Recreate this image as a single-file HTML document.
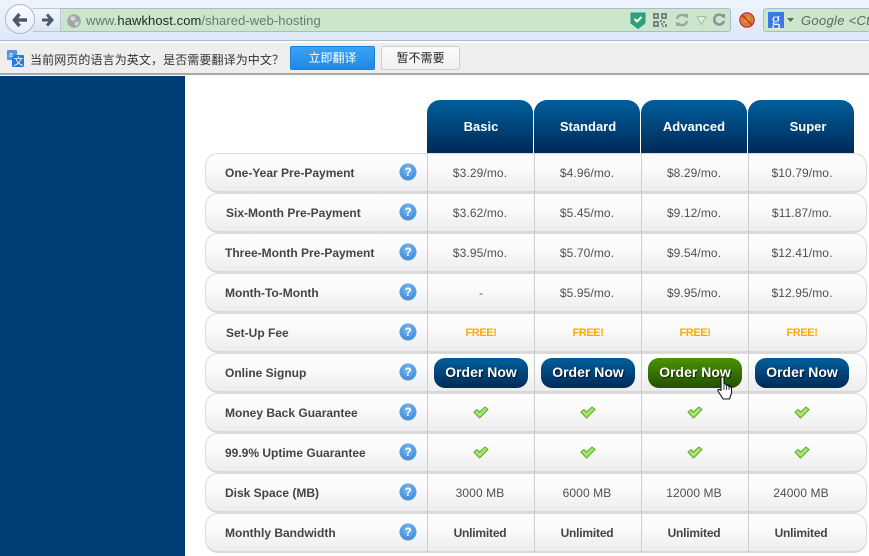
<!DOCTYPE html>
<html><head><meta charset="utf-8"><style>
html,body{margin:0;padding:0;width:869px;height:556px;overflow:hidden;background:#fff;font-family:"Liberation Sans","Noto Sans CJK SC",sans-serif}
div,span,svg{position:absolute}
.top{left:0;top:0;width:869px;height:41px;background:linear-gradient(#eef4fc,#dce8f7)}
.urlbox{left:60px;top:8px;width:671px;height:24px;background:#cbe6ca;border:1px solid #a9bccd;border-left:1px solid #b9cbdc;box-sizing:border-box;border-radius:0 3px 3px 0}
.txt{left:86px;top:13px;font-size:13px;line-height:15px;color:#5f7d6b;white-space:nowrap;letter-spacing:.08px}
.txt b{font-weight:normal;color:#1d2b24}
.barline{left:0;top:73px;width:869px;height:2px;background:#a8a8a8}
.blue{left:0;top:76px;width:185px;height:480px;background:#003c75}
.hd{top:100px;width:106px;height:53px;border-radius:13px 13px 0 0;background:linear-gradient(#005f9c,#002a58);color:#fff;font-weight:bold;font-size:13px;line-height:54px;text-align:center}
.row{left:205px;width:662px;height:40px;box-sizing:border-box;border:1px solid #dcdcdc;border-bottom:2px solid #d8d8d8;border-radius:13px;background:linear-gradient(#fff,#fbfbfb 40%,#ececec)}
.vl{top:153px;width:1px;height:400px;background:#cfcfcf}
.lb{left:225px;font-size:12px;font-weight:bold;color:#444;line-height:14px;white-space:nowrap}
.v{width:106px;font-size:12px;color:#505050;line-height:14px;text-align:center;white-space:nowrap;letter-spacing:.1px}
.v.b{font-weight:bold;color:#444;letter-spacing:-.2px}
.v.f{color:#ffa800;font-weight:bold;font-size:11px;letter-spacing:-.4px}
.q{left:400px;width:16px;height:16px;border-radius:50%;background:radial-gradient(circle at 50% 35%,#7db9f0,#2b7fd6);color:#fff;font-size:12px;font-weight:bold;line-height:16px;text-align:center;box-shadow:0 0 0 .5px #4a90dc}
.o{top:358px;width:94px;height:30px;border-radius:11px;background:linear-gradient(#005f9c,#002a58);color:#fff;font-weight:bold;font-size:14px;line-height:28px;text-align:center;text-shadow:1px 1px 1px #001830;white-space:nowrap}
.o.g{background:linear-gradient(#4b9400,#234f00);text-shadow:1px 1px 1px #142c00}
</style></head><body>
<div class="top"></div>
<div class="urlbox"></div>
<div style="left:33px;top:8px;width:28px;height:24px;background:linear-gradient(#f3f7fc,#dbe6f3);border:1px solid #b5c6d8;border-left:0;box-sizing:border-box"></div>
<div style="left:5px;top:4px;width:30px;height:30px;box-sizing:border-box;border-radius:50%;background:linear-gradient(#fbfdff,#e6eef8);border:1px solid #a9b8c8"></div>
<svg style="left:0;top:0" width="70" height="36" viewBox="0 0 70 36">
<path d="M19.5 14 L14.5 20 L19.5 26 M15 20 H27" fill="none" stroke="#4d5a66" stroke-width="3.4"/>
<path d="M47 14.5 L52 20 L47 25.5 M52 20 H42" fill="none" stroke="#4d5a66" stroke-width="3"/>
</svg>
<svg style="left:67px;top:14px" width="14" height="14" viewBox="0 0 14 14"><circle cx="7" cy="7" r="6.8" fill="#a3a6a6"/><path d="M3 3 L7 2 L9 5 L6 7 L4 6Z M8 8 L12 7 L11 11 L8 12Z" fill="#d4d6d6"/></svg>
<div class="txt">www.<b>hawkhost.com</b>/shared-web-hosting</div>

<svg style="left:630px;top:12px" width="16" height="17" viewBox="0 0 16 17"><path d="M1 1 H15 V11 L8 16.5 L1 11Z" fill="#2fa36b" stroke="#2b8fae" stroke-width="1"/><path d="M4.5 7 L7 9.5 L11.5 5" fill="none" stroke="#fff" stroke-width="2"/></svg>
<svg style="left:653px;top:13px" width="14" height="14" viewBox="0 0 14 14"><path d="M0 0H6V6H0Z M8 0H14V6H8Z M0 8H6V14H0Z" fill="#7d8488"/><path d="M2 2H4V4H2Z M10 2H12V4H10Z M2 10H4V12H2Z" fill="#cbe6ca"/><path d="M7 7H9V9H7Z M10 8H12V10H10Z M8 10H10V12H8Z M12 11H14V14H12Z M9 12.5H11V14H9Z" fill="#7d8488"/></svg>
<svg style="left:675px;top:13px" width="14" height="14" viewBox="0 0 14 14"><path d="M2 6 A5 5 0 0 1 11 4 M12 8 A5 5 0 0 1 3 10" fill="none" stroke="#9aa5a8" stroke-width="2.4"/><path d="M9 1 L13 1 L13 6Z M1 8 L5 13 L1 13Z" fill="#9aa5a8"/></svg>
<svg style="left:696px;top:15px" width="11" height="11" viewBox="0 0 11 11"><path d="M1 1.5 H10 L5.5 9.5Z" fill="#dfeee0" stroke="#a8b8b0"/></svg>
<svg style="left:712px;top:13px" width="14" height="14" viewBox="0 0 14 14"><path d="M11.5 4 A5 5 0 1 0 12 8" fill="none" stroke="#85939a" stroke-width="2.4"/><path d="M8.5 1 L13 1 L13 6Z" fill="#85939a"/></svg>
<svg style="left:739px;top:12px" width="16" height="16" viewBox="0 0 16 16"><circle cx="8" cy="8" r="6" fill="#c9812f"/><path d="M4 9 L9 4 L12 7 L8 11Z" fill="#e09a3a"/><circle cx="8" cy="8" r="7" fill="none" stroke="#cf2a27" stroke-width="1.5"/><path d="M3 3 L13 13" stroke="#cf2a27" stroke-width="1.5"/></svg>
<div style="left:763px;top:8px;width:106px;height:24px;background:#cbe6ca;border:1px solid #a9bccd;border-right:0;box-sizing:border-box;border-radius:3px 0 0 3px"></div>
<div style="left:768px;top:12px;width:16px;height:16px;background:#3b78e7;color:#fff;font:18px/14px 'Liberation Serif',serif;text-align:center">g</div>
<svg style="left:787px;top:18px" width="7" height="4" viewBox="0 0 7 4"><path d="M0 0H7L3.5 4Z" fill="#666"/></svg>
<div style="left:801px;top:13px;font-size:13px;line-height:15px;font-style:italic;color:#5b6a62;white-space:nowrap;letter-spacing:.3px">Google &lt;Ctrl+K&gt;</div>
<div style="left:0;top:40px;width:869px;height:1px;background:#a9bccd"></div>
<div style="left:0;top:41px;width:869px;height:2px;background:#fff"></div>
<div style="left:0;top:43px;width:869px;height:30px;background:#eeeeee"></div>
<div class="barline"></div>

<svg style="left:7px;top:50px" width="17" height="17" viewBox="0 0 17 17"><rect x="0" y="0" width="10" height="10" rx="1" fill="#4f97e6"/><rect x="5" y="5" width="12" height="12" rx="1" fill="#1a7fe8"/><text x="6.5" y="15" font-size="10" fill="#fff" font-family="Noto Sans CJK SC,sans-serif">文</text><text x="2" y="7" font-size="7" fill="#fff" font-family="Liberation Sans,sans-serif">a</text></svg>
<div style="left:30px;top:52px;font-size:12px;line-height:17px;color:#333;white-space:nowrap;letter-spacing:.1px">当前网页的语言为英文，是否需要翻译为中文？</div>
<div style="left:290px;top:46px;width:85px;height:24px;box-sizing:border-box;border:1px solid #1e80d4;border-radius:2px;background:linear-gradient(#3ba4f6,#1f87e5);color:#fff;font-size:12px;line-height:22px;text-align:center">立即翻译</div>
<div style="left:381px;top:46px;width:79px;height:24px;box-sizing:border-box;border:1px solid #cfcfcf;border-radius:2px;background:linear-gradient(#fbfbfb,#f0f0f0);color:#222;font-size:12px;line-height:22px;text-align:center">暂不需要</div>

<div class="blue"></div>

<div class="row" style="top:153px"></div>
<div class="row" style="top:193px"></div>
<div class="row" style="top:233px"></div>
<div class="row" style="top:273px"></div>
<div class="row" style="top:313px"></div>
<div class="row" style="top:353px"></div>
<div class="row" style="top:393px"></div>
<div class="row" style="top:433px"></div>
<div class="row" style="top:473px"></div>
<div class="row" style="top:513px"></div>

<div class="vl" style="left:427px"></div>
<div class="vl" style="left:534px"></div>
<div class="vl" style="left:641px"></div>
<div class="vl" style="left:748px"></div>

<div class="hd" style="left:427px;text-indent:2px">Basic</div>
<div class="hd" style="left:534px;text-indent:2px">Standard</div>
<div class="hd" style="left:641px">Advanced</div>
<div class="hd" style="left:748px;text-indent:14px">Super</div>

<div class="lb" style="top:166px">One-Year Pre-Payment</div>
<div class="lb" style="top:206px;left:226px">Six-Month Pre-Payment</div>
<div class="lb" style="top:246px">Three-Month Pre-Payment</div>
<div class="lb" style="top:286px">Month-To-Month</div>
<div class="lb" style="top:326px;left:226px">Set-Up Fee</div>
<div class="lb" style="top:366px">Online Signup</div>
<div class="lb" style="top:406px">Money Back Guarantee</div>
<div class="lb" style="top:446px">99.9% Uptime Guarantee</div>
<div class="lb" style="top:486px">Disk Space (MB)</div>
<div class="lb" style="top:526px">Monthly Bandwidth</div>

<div class="q" style="top:164px">?</div>
<div class="q" style="top:204px">?</div>
<div class="q" style="top:244px">?</div>
<div class="q" style="top:284px">?</div>
<div class="q" style="top:324px">?</div>
<div class="q" style="top:364px">?</div>
<div class="q" style="top:404px">?</div>
<div class="q" style="top:444px">?</div>
<div class="q" style="top:484px">?</div>
<div class="q" style="top:524px">?</div>

<div class="v" style="left:427px;top:166px">$3.29/mo.</div><div class="v" style="left:534px;top:166px">$4.96/mo.</div><div class="v" style="left:641px;top:166px">$8.29/mo.</div><div class="v" style="left:749px;top:166px">$10.79/mo.</div>
<div class="v" style="left:427px;top:206px">$3.62/mo.</div><div class="v" style="left:534px;top:206px">$5.45/mo.</div><div class="v" style="left:641px;top:206px">$9.12/mo.</div><div class="v" style="left:749px;top:206px">$11.87/mo.</div>
<div class="v" style="left:427px;top:246px">$3.95/mo.</div><div class="v" style="left:534px;top:246px">$5.70/mo.</div><div class="v" style="left:641px;top:246px">$9.54/mo.</div><div class="v" style="left:749px;top:246px">$12.41/mo.</div>
<div class="v" style="left:428px;top:286px">-</div><div class="v" style="left:534px;top:286px">$5.95/mo.</div><div class="v" style="left:641px;top:286px">$9.95/mo.</div><div class="v" style="left:749px;top:286px">$12.95/mo.</div>
<div class="v f" style="left:428px;top:326px">FREE!</div><div class="v f" style="left:535px;top:326px">FREE!</div><div class="v f" style="left:642px;top:326px">FREE!</div><div class="v f" style="left:749px;top:326px">FREE!</div>

<div class="o" style="left:434px">Order Now</div>
<div class="o" style="left:541px">Order Now</div>
<div class="o g" style="left:648px">Order Now</div>
<div class="o" style="left:755px">Order Now</div>

<svg style="left:473px;top:406px" width="16" height="13" viewBox="0 0 16 13"><path d="M1 6 L4 3.5 L6.5 6 L12 1 L15 3.5 L6.5 12Z" fill="#a8e66c" stroke="#5aa632" stroke-width="1"/></svg>
<svg style="left:580px;top:406px" width="16" height="13" viewBox="0 0 16 13"><path d="M1 6 L4 3.5 L6.5 6 L12 1 L15 3.5 L6.5 12Z" fill="#a8e66c" stroke="#5aa632" stroke-width="1"/></svg>
<svg style="left:687px;top:406px" width="16" height="13" viewBox="0 0 16 13"><path d="M1 6 L4 3.5 L6.5 6 L12 1 L15 3.5 L6.5 12Z" fill="#a8e66c" stroke="#5aa632" stroke-width="1"/></svg>
<svg style="left:794px;top:406px" width="16" height="13" viewBox="0 0 16 13"><path d="M1 6 L4 3.5 L6.5 6 L12 1 L15 3.5 L6.5 12Z" fill="#a8e66c" stroke="#5aa632" stroke-width="1"/></svg>
<svg style="left:473px;top:446px" width="16" height="13" viewBox="0 0 16 13"><path d="M1 6 L4 3.5 L6.5 6 L12 1 L15 3.5 L6.5 12Z" fill="#a8e66c" stroke="#5aa632" stroke-width="1"/></svg>
<svg style="left:580px;top:446px" width="16" height="13" viewBox="0 0 16 13"><path d="M1 6 L4 3.5 L6.5 6 L12 1 L15 3.5 L6.5 12Z" fill="#a8e66c" stroke="#5aa632" stroke-width="1"/></svg>
<svg style="left:687px;top:446px" width="16" height="13" viewBox="0 0 16 13"><path d="M1 6 L4 3.5 L6.5 6 L12 1 L15 3.5 L6.5 12Z" fill="#a8e66c" stroke="#5aa632" stroke-width="1"/></svg>
<svg style="left:794px;top:446px" width="16" height="13" viewBox="0 0 16 13"><path d="M1 6 L4 3.5 L6.5 6 L12 1 L15 3.5 L6.5 12Z" fill="#a8e66c" stroke="#5aa632" stroke-width="1"/></svg>

<div class="v" style="left:427px;top:486px">3000 MB</div><div class="v" style="left:534px;top:486px">6000 MB</div><div class="v" style="left:641px;top:486px">12000 MB</div><div class="v" style="left:748px;top:486px">24000 MB</div>
<div class="v b" style="left:427px;top:526px">Unlimited</div><div class="v b" style="left:534px;top:526px">Unlimited</div><div class="v b" style="left:641px;top:526px">Unlimited</div><div class="v b" style="left:748px;top:526px">Unlimited</div>

<svg style="left:715px;top:376px" width="20" height="25" viewBox="0 0 20 25"><path d="M6 2 C6 0.5 9 0.5 9 2 V8 L11 8 V9 L13 8.5 V10 L15 9.5 V11 L16.5 11 V17 L14.5 23 H8 L3 15 C2.5 13 4.5 13 6 14.5Z" fill="#fff" stroke="#111" stroke-width="1.1" stroke-linejoin="round"/><path d="M9 9V14 M11.5 9.5V14 M14 10V14" stroke="#111" stroke-width=".8"/></svg>
</body></html>
